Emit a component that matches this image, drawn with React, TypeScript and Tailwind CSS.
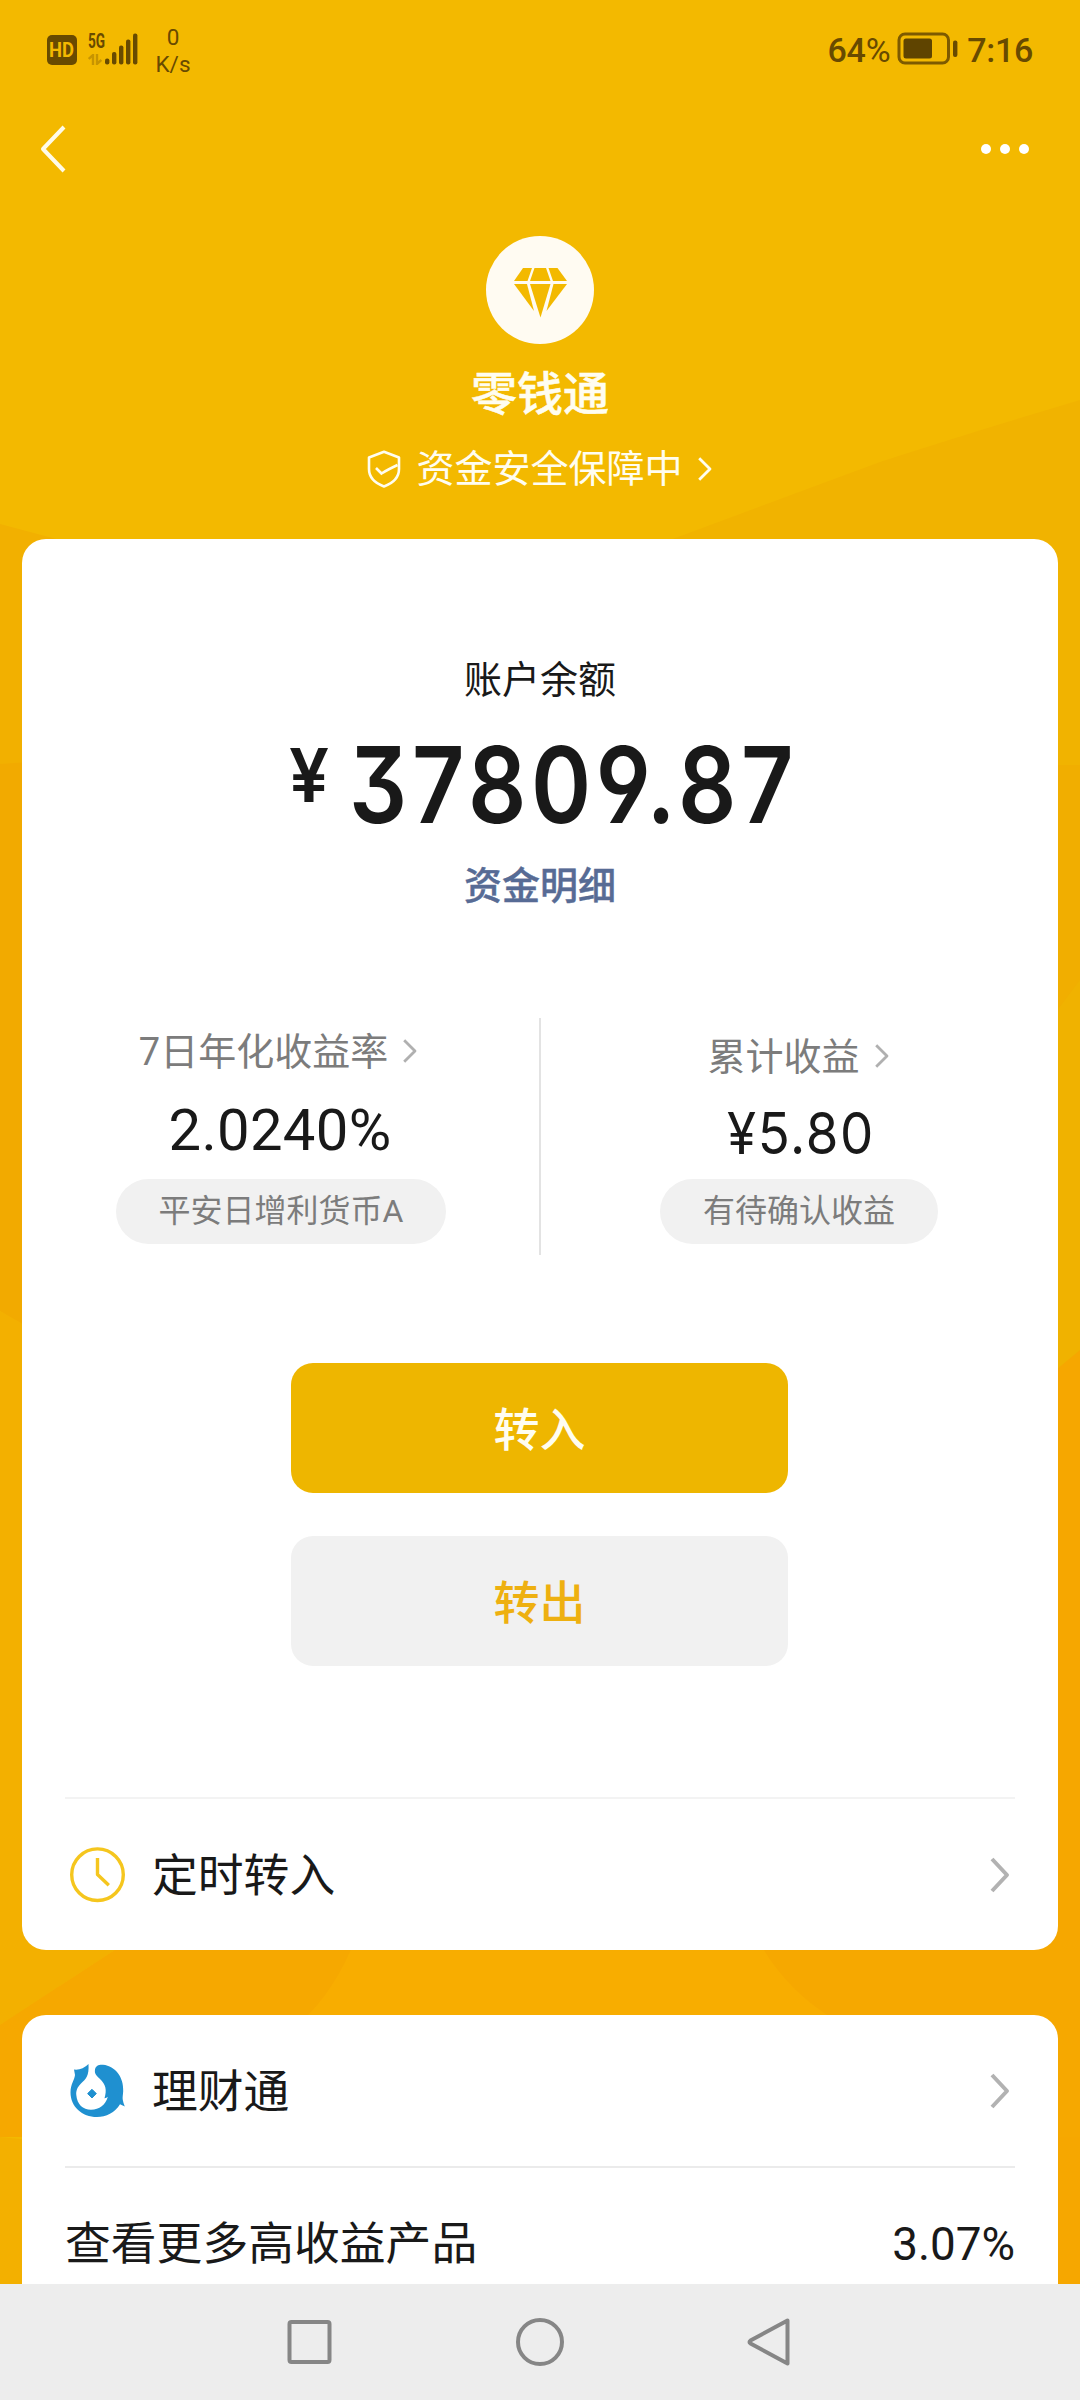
import type { ReactNode } from "react";
import clsx from "clsx";

function Chevron({ className }: { className?: string }) {
  return (
    <svg viewBox="0 0 20 36" fill="none" stroke="currentColor" strokeWidth="4" className={className}>
      <path d="M2 2 L17 18 L2 34" strokeLinejoin="round" />
    </svg>
  );
}

function ThinChevron({ className }: { className?: string }) {
  return (
    <svg viewBox="0 0 14 24" fill="none" stroke="currentColor" strokeWidth="2.8" className={className}>
      <path d="M1.2 1.2 L12 12 L1.2 22.8" strokeLinejoin="round" />
    </svg>
  );
}

function Backdrop() {
  return (
    <svg viewBox="0 0 1080 2284" className="absolute inset-0 w-[1080px] h-[2284px]">
      <rect width="1080" height="2284" fill="#f3b900" />
      <path d="M1080 400 Q960 436 880 462 L670 540 V900 H1080 Z" fill="#f1b300" />
      <path d="M0 524 L60 540 V800 H0 Z" fill="#f2b000" />
      <path d="M0 764 L60 760 V1350 L0 1311 Z" fill="#f2aa00" />
      <path d="M0 1311 L60 1345 V1990 L0 2025 Z" fill="#f3b000" />
      <path d="M1020 765 H1080 V990 L1020 1060 Z" fill="#f1ae00" />
      <path d="M1020 1060 L1080 980 V1360 L1020 1400 Z" fill="#f0b200" />
      <path d="M1020 1400 L1080 1350 V2284 H1020 Z" fill="#f6a700" />
      <path d="M0 1940 H130 L0 2025 Z" fill="#f3b000" />
      <path d="M130 1940 H1080 V2137 H0 V2025 Z" fill="#f6a800" />
      <path d="M355 1940 H758 Q785 1990 835 2020 H303 Q335 1990 355 1940 Z" fill="#f8ad00" />
      <path d="M0 2137 L60 2143 V2284 H0 Z" fill="#f3b000" />
    </svg>
  );
}

function StatusBar() {
  return (
    <div className="h-[98px] px-[47px] flex items-center justify-between text-[#684a00]">
      <div className="flex items-center">
        <div className="w-[30px] h-[30px] mt-[2px] rounded-[5px] bg-[#684a00] text-[#f3b900] flex justify-center text-[20px] leading-[30px] font-bold">
          <span className="block scale-x-[0.92]">HD</span>
        </div>
        <div className="ml-[11px] w-[17px] h-[32px] flex flex-col justify-between">
          <span className="block text-[20px] leading-[16px] font-bold origin-left scale-x-[0.68]">5G</span>
          <svg viewBox="0 0 14 11" className="w-[14px] h-[11px]" fill="none" stroke="#c79400" strokeWidth="2.4">
            <path d="M0.8 5 L5 1 V11 M9 0 V10 L13.4 6" />
          </svg>
        </div>
        <svg viewBox="0 0 33 32" className="w-[33px] h-[32px]" fill="currentColor">
          <rect x="0" y="25.5" width="4.4" height="6" rx="2" />
          <rect x="7" y="19" width="4.4" height="12.5" rx="2" />
          <rect x="14" y="12.5" width="4.4" height="19" rx="2" />
          <rect x="21" y="6.5" width="4.4" height="25" rx="2" />
          <rect x="28" y="0.5" width="4.4" height="31" rx="2" />
        </svg>
        <div className="ml-[17px] mt-[4px] w-[36px] text-center text-[22.5px] leading-[27px]">
          <div>0</div>
          <div>K/s</div>
        </div>
      </div>
      <div className="flex items-center text-[34px] leading-[40px]">
        <span className="mt-[2px] tracking-[-0.3px]"><span className="font-medium">64</span>%</span>
        <svg viewBox="0 0 62 34" className="ml-[7px] w-[62px] h-[34px]" fill="none">
          <rect x="2" y="2" width="49.5" height="29" rx="6" stroke="#7d5a00" strokeWidth="3" />
          <rect x="6.5" y="6.5" width="28.5" height="20" rx="2.5" fill="#5f4400" />
          <rect x="56" y="8.5" width="4.4" height="16.5" rx="2" fill="#684a00" />
        </svg>
        <span className="ml-[8px] mt-[2px] font-medium tracking-[-0.3px]">7:16</span>
      </div>
    </div>
  );
}

function TitleBar() {
  return (
    <div className="h-[102px] pl-[40px] pr-[51px] flex items-center justify-between text-[#fffbe8]">
      <svg viewBox="0 0 26 48" className="w-[26px] h-[48px]" fill="none" stroke="currentColor" strokeWidth="4">
        <path d="M24 2 L3 24 L24 46" strokeLinejoin="round" />
      </svg>
      <div className="flex gap-[9px]">
        <span className="w-[10px] h-[10px] rounded-full bg-white" />
        <span className="w-[10px] h-[10px] rounded-full bg-white" />
        <span className="w-[10px] h-[10px] rounded-full bg-white" />
      </div>
    </div>
  );
}

function Hero() {
  return (
    <div className="pt-9 flex flex-col items-center text-[#fffdf0]">
      <div className="w-[108px] h-[108px] rounded-full bg-[#fffbf2] flex items-center justify-center">
        <svg viewBox="0 0 54 50" className="w-[55px] h-[50px] mt-[5px]" fill="#f3b900">
          <path d="M9.5 0 H18.5 L14 13 H0.5 Z" />
          <path d="M21 0 H32.5 L37 13 H16.5 Z" />
          <path d="M35 0 H44 L53.5 13 H39.5 Z" />
          <path d="M0.5 16 H13.5 L20.5 43 Z" />
          <path d="M16.5 16 H37 L27 49.5 Z" />
          <path d="M40 16 H53.5 L33 43 Z" />
        </svg>
      </div>
      <h1 className="mt-[22px] text-[46px] leading-[56px] font-medium [-webkit-text-stroke:0.5px]">零钱通</h1>
      <div className="mt-[21px] mb-px flex items-center text-[38px] leading-[52px]">
        <svg viewBox="0 0 34 38" className="w-[34px] h-[38px] mr-[15px]" fill="none" stroke="currentColor" strokeWidth="2.6">
          <path d="M17 1.8 L32 7.5 V19 C32 28 25 33.5 17 36.5 C9 33.5 2 28 2 19 V7.5 Z" strokeLinejoin="round" />
          <path d="M9 18 L14.5 23.5 Q20 20 30.5 15" />
        </svg>
        <span>资金安全保障中</span>
        <ThinChevron className="ml-[15px] mr-px w-[14px] h-[24px]" />
      </div>
    </div>
  );
}

function Stat({ label, value, tag, className, labelClass, valueClass }: {
  label: string;
  value: ReactNode;
  tag: string;
  className?: string;
  labelClass?: string;
  valueClass?: string;
}) {
  return (
    <div className={clsx("flex-1 flex flex-col items-center", className)}>
      <div className={clsx("flex items-center text-[38px] leading-[48px] text-[#7c7c7c]", labelClass)}>
        {label}
        <ThinChevron className="ml-[15px] -mt-[2px] w-[14px] h-[24px] text-[#b0b0b0]" />
      </div>
      <div className={clsx("text-[58px] leading-[68px] text-[#191919]", valueClass)}>{value}</div>
      <div className="mt-auto mb-[11px] h-[65px] px-[43px] rounded-full bg-[#f1f1f1] text-[32px] leading-[65px] text-[#7c7c7c]">
        {tag}
      </div>
    </div>
  );
}

function ClockIcon() {
  return (
    <svg viewBox="0 0 56 56" className="w-[56px] h-[56px]" fill="none" stroke="#f5c61e" strokeWidth="3.4">
      <circle cx="27.5" cy="27.7" r="25.8" />
      <path d="M27.5 11 V27.5 L38.8 38.3" strokeLinejoin="round" />
    </svg>
  );
}

function LicaitongIcon() {
  return (
    <svg viewBox="0 0 56 56" className="w-[56px] h-[56px]" fill="#1f90d0">
      <path d="M4 6.5 Q12 7.5 18.5 1 C19.2 13 16 16 11 20.5 C7 24.5 6 28 6.3 32 C7 41.5 13 46.8 21 46.8 C29.5 46.8 35.5 42 37.8 33.8 Q36.5 35.3 34.5 35.2 C37 27 36 21.5 29.5 15.5 C25.5 12 24.5 10 25 6.5 C25.8 2.5 29 1.5 33 1.8 C45.5 3 53.8 14.5 53.2 28 C53 32 52.3 34.5 52.8 37 Q53.3 40 54.8 43.5 L50 41.2 C45 49.5 36 54 27 54 C12 54 0.5 43.5 0.5 29.5 C0.5 21 4.5 17 5 12 Z" />
      <path d="M22 26.3 L26.3 30.6 L22 35 L17.6 30.6 Z" strokeLinejoin="round" stroke="#1f90d0" />
    </svg>
  );
}

function EntryRow({ icon, label, className }: { icon: ReactNode; label: string; className?: string }) {
  return (
    <div className={clsx("mx-[43px] px-[5px] flex items-center", className)}>
      {icon}
      <span className="ml-[26px] mt-[5px] text-[45.8px] leading-[60px] text-[#191919]">{label}</span>
      <Chevron className="ml-auto w-[20px] h-[36px] text-[#b2b2b2]" />
    </div>
  );
}

function BalanceCard() {
  return (
    <section className="mx-[22px] mt-[43px] h-[1411px] pt-[117px] rounded-[24px] bg-white flex flex-col">
      <div className="text-center text-[38px] leading-[48px] text-[#191919]">账户余额</div>
      <div className="mt-[31px] h-[100px] flex justify-center text-[#191919] font-['Inter','Roboto',sans-serif] [font-feature-settings:'ss01','cv09']">
        <span className="w-[46px] mr-[16px] text-[74px] leading-[80px] font-semibold text-center scale-x-[0.96]">¥</span>
        <span className="w-[446px] flex justify-center text-[106px] leading-[100px] font-[560]">
          <span className="block pl-[7px] tracking-[5.5px] scale-x-[0.86]">37809.87</span>
        </span>
      </div>
      <a className="mt-[27px] text-center text-[38px] leading-[48px] font-medium text-[#576b95] [-webkit-text-stroke:0.4px]">资金明细</a>

      <div className="mt-[108px] h-[237px] flex">
        <Stat
          className="pt-[10px]"
          labelClass="mr-[6px]"
          valueClass="mt-[20px] mr-[2px] tracking-[0.3px]"
          label="7日年化收益率"
          value="2.0240%"
          tag="平安日增利货币A"
        />
        <div className="w-[2px] -mx-px bg-[#e3e3e3]" />
        <Stat
          className="pt-[15px]"
          labelClass="mr-[2px]"
          valueClass="mt-[18px]"
          label="累计收益"
          value={<span className="block pl-[5px] tracking-[1.8px] font-['Inter','Roboto',sans-serif] scale-x-[0.91]">¥5.80</span>}
          tag="有待确认收益"
        />
      </div>

      <div className="mt-[108px] mr-px flex flex-col items-center gap-[43px] text-[46px] leading-[134px] font-medium">
        <button className="w-[497px] h-[130px] rounded-[22px] bg-[#eeb600] text-[#fffdf0]">转入</button>
        <button className="w-[497px] h-[130px] rounded-[22px] bg-[#f1f1f1] text-[#eeb010]">转出</button>
      </div>

      <div className="mt-[131px] mx-[43px] h-[2px] bg-[#f3f3f3]" />
      <EntryRow icon={<ClockIcon />} label="定时转入" className="h-[151px]" />
    </section>
  );
}

function WealthCard() {
  return (
    <section className="mx-[22px] mt-[65px] h-[269px] rounded-t-[24px] bg-white">
      <EntryRow icon={<LicaitongIcon />} label="理财通" className="h-[151px]" />
      <div className="mx-[43px] h-[2px] bg-[#ebebeb]" />
      <div className="mx-[43px] mt-[47px] flex justify-between text-[45.8px] leading-[60px] text-[#191919]">
        <span>查看更多高收益产品</span>
        <span>3.07%</span>
      </div>
    </section>
  );
}

function NavigationBar() {
  return (
    <div className="h-[116px] bg-[#ededed] flex items-center justify-center gap-[180px] text-[#868686]">
      <svg viewBox="0 0 50 50" className="w-[50px] h-[50px]" fill="none" stroke="currentColor" strokeWidth="4">
        <rect x="4.500" y="5" width="40" height="40" rx="2" />
      </svg>
      <svg viewBox="0 0 50 50" className="w-[50px] h-[50px]" fill="none" stroke="currentColor" strokeWidth="4">
        <circle cx="25" cy="25" r="22" />
      </svg>
      <svg viewBox="0 0 50 50" className="w-[50px] h-[50px]" fill="none" stroke="currentColor" strokeWidth="4">
        <path d="M42.5 3.5 L5.5 23.5 Q3.5 25 5.5 26.5 L42.5 46.5 Z" strokeLinejoin="round" />
      </svg>
    </div>
  );
}

export default function App() {
  return (
    <div className="relative w-[1080px] h-[2400px] overflow-hidden bg-[#f3b900] font-['Roboto','Noto_Sans_CJK_SC',sans-serif]">
      <Backdrop />
      <div className="relative">
        <StatusBar />
        <TitleBar />
        <Hero />
        <BalanceCard />
        <WealthCard />
        <NavigationBar />
      </div>
    </div>
  );
}
